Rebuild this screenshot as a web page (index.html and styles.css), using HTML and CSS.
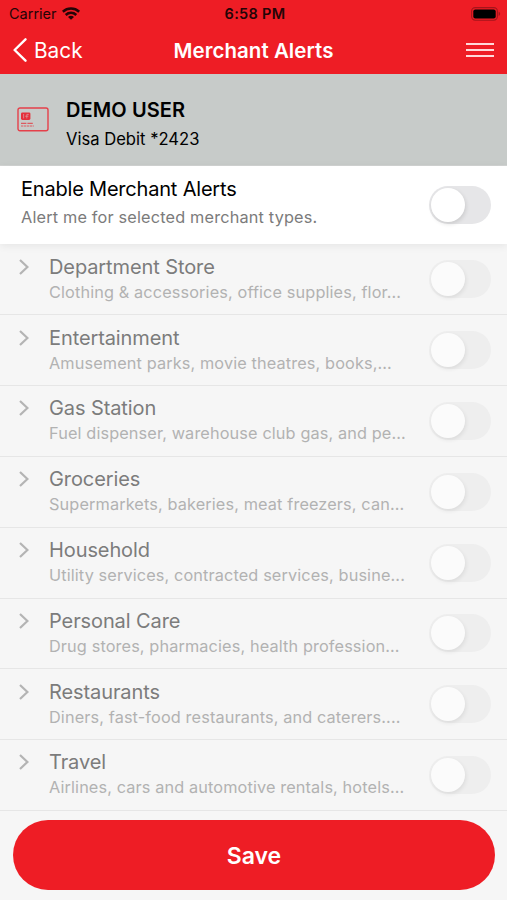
FILE: index.html
```html
<!DOCTYPE html>
<html lang="en">
<head>
    <meta charset="UTF-8">
    <meta name="viewport" content="width=device-width, initial-scale=1.0">
    <title>Merchant Alerts</title>
    <link rel="stylesheet" href="styles.css">
</head>
<body>
    <header class="top">
        <div class="status">
            <div class="carrier">
                <span>Carrier</span>
                <svg width="18" height="13" viewBox="0 0 18 13" fill="none" stroke="#240406" stroke-width="2.6">
                    <path d="M.8 4.7C5.5 .5 12.5 .5 17.2 4.7"/>
                    <path d="M3.7 7.9C6.8 5.2 11.2 5.2 14.3 7.9"/>
                    <path d="M9 12.8L6 9.9C7.8 8.4 10.2 8.4 12 9.9Z" fill="#240406" stroke="none"/>
                </svg>
            </div>
            <div class="time">6:58 PM</div>
            <svg class="battery" width="30" height="14" viewBox="0 0 30 14">
                <rect x=".6" y=".6" width="25.8" height="12.6" rx="3.6" fill="none" stroke="#a5151b" stroke-width="1.1"/>
                <rect x="2.3" y="2.4" width="22.4" height="9" rx="2" fill="#000"/>
                <path d="M27.6 4.8C29.6 5.4 29.6 8.4 27.6 9Z" fill="#a5151b"/>
            </svg>
        </div>
        <nav class="nav">
            <a class="back">
                <svg width="14" height="24" viewBox="0 0 14 24" fill="none" stroke="#fff" stroke-width="2.4" stroke-linecap="round" stroke-linejoin="round"><path d="M12.5 1.3L1.6 12L12.5 22.7"/></svg>
                <span>Back</span>
            </a>
            <h1>Merchant Alerts</h1>
            <div class="menu"><i></i><i></i><i></i></div>
        </nav>
    </header>

    <section class="card">
        <svg width="32" height="25" viewBox="0 0 32 25">
            <rect x="1" y="1" width="30" height="22.8" rx="2" fill="none" stroke="#e5404a" stroke-width="1.4"/>
            <rect x="4" y="5.4" width="9.4" height="7.6" rx="1.4" fill="#e5303a"/>
            <path d="M6.6 7V11.4M9.8 11.4V7.4H11.8M8.2 9.2H11.4" fill="none" stroke="#d9a5a6" stroke-width=".7"/>
            <path d="M4 16.4H16" stroke="#dc5a60" stroke-width="1.3" stroke-dasharray="5.4 1"/>
            <path d="M4 19H16.8" stroke="#dc5a60" stroke-width="1" stroke-dasharray="2.4 .6"/>
        </svg>
        <div>
            <h2>DEMO USER</h2>
            <p>Visa Debit *2423</p>
        </div>
    </section>

    <section class="enable">
        <div>
            <h3>Enable Merchant Alerts</h3>
            <p>Alert me for selected merchant types.</p>
        </div>
        <span class="switch"></span>
    </section>

    <ul class="types">
        <li>
            <svg class="chevron" viewBox="0 0 10 16"><path d="M1 1L8.4 8L1 15"/></svg>
            <div>
                <h3>Department Store</h3>
                <p>Clothing &amp; accessories, office supplies, flor...</p>
            </div>
            <span class="switch"></span>
        </li>
        <li>
            <svg class="chevron" viewBox="0 0 10 16"><path d="M1 1L8.4 8L1 15"/></svg>
            <div>
                <h3>Entertainment</h3>
                <p>Amusement parks, movie theatres, books,...</p>
            </div>
            <span class="switch"></span>
        </li>
        <li>
            <svg class="chevron" viewBox="0 0 10 16"><path d="M1 1L8.4 8L1 15"/></svg>
            <div>
                <h3>Gas Station</h3>
                <p>Fuel dispenser, warehouse club gas, and pe...</p>
            </div>
            <span class="switch"></span>
        </li>
        <li>
            <svg class="chevron" viewBox="0 0 10 16"><path d="M1 1L8.4 8L1 15"/></svg>
            <div>
                <h3>Groceries</h3>
                <p>Supermarkets, bakeries, meat freezers, can...</p>
            </div>
            <span class="switch"></span>
        </li>
        <li>
            <svg class="chevron" viewBox="0 0 10 16"><path d="M1 1L8.4 8L1 15"/></svg>
            <div>
                <h3>Household</h3>
                <p>Utility services, contracted services, busine...</p>
            </div>
            <span class="switch"></span>
        </li>
        <li>
            <svg class="chevron" viewBox="0 0 10 16"><path d="M1 1L8.4 8L1 15"/></svg>
            <div>
                <h3>Personal Care</h3>
                <p>Drug stores, pharmacies, health profession...</p>
            </div>
            <span class="switch"></span>
        </li>
        <li>
            <svg class="chevron" viewBox="0 0 10 16"><path d="M1 1L8.4 8L1 15"/></svg>
            <div>
                <h3>Restaurants</h3>
                <p>Diners, fast-food restaurants, and caterers....</p>
            </div>
            <span class="switch"></span>
        </li>
        <li>
            <svg class="chevron" viewBox="0 0 10 16"><path d="M1 1L8.4 8L1 15"/></svg>
            <div>
                <h3>Travel</h3>
                <p>Airlines, cars and automotive rentals, hotels...</p>
            </div>
            <span class="switch"></span>
        </li>
    </ul>

    <button class="save">Save</button>
</body>
</html>
```
FILE: styles.css
```css
* { box-sizing: border-box; }
body { margin: 0; height: 900px; overflow: hidden; background: #f6f6f6; font-family: Inter, "Liberation Sans", sans-serif; color: #000; }
h1, h2, h3, p, ul { margin: 0; padding: 0; font-weight: 400; }
svg { display: block; flex: none; }

/* red header */
.top { height: 74px; background: #ee1d25; }
.status { display: grid; grid-template-columns: 1fr auto 1fr; align-items: center; height: 27px; padding: 0 6px 0 9px; color: #240406; }
.carrier { display: flex; align-items: center; gap: 6px; font-size: 14.5px; }
.carrier svg { margin-left: -1px; }
.time { font-size: 14.5px; font-weight: 600; letter-spacing: 0.3px; }
.battery { justify-self: end; }
.nav { display: grid; grid-template-columns: 1fr auto 1fr; align-items: center; height: 46px; padding: 0 13px; color: #fff; }
.back { display: flex; align-items: center; gap: 7px; font-size: 20.8px; }
.nav h1 { padding-top: 1px; font-size: 20.5px; line-height: 28px; font-weight: 600; letter-spacing: 0.05px; }
.menu { justify-self: end; display: grid; gap: 4px; width: 28px; }
.menu i { height: 2px; background: #ffd9da; }

.card { display: flex; align-items: center; gap: 17px; height: 92px; padding: 0 17px; background: #c7cbc9; border-bottom: 1px solid #d2d4d3; }
.card div { padding-top: 11px; }
.card h2 { font-size: 20px; line-height: 28px; font-weight: 600; letter-spacing: 0.1px; }
.card p { font-size: 16.6px; line-height: 30px; }

.enable { position: relative; display: flex; justify-content: space-between; height: 78px; padding: 8px 16px 0 21px; background: #fff; box-shadow: 0 2px 8px rgba(0, 0, 0, 0.07); }
.enable h3 { font-size: 20px; line-height: 30px; letter-spacing: -0.2px; }
.enable p { font-size: 16.3px; line-height: 27px; letter-spacing: 0.17px; color: #7b7b7b; }

.switch { flex: none; width: 62px; height: 38px; border-radius: 19px; background: #e6e6e8; margin-top: 12px; padding: 2px; }
.switch::before { content: ""; display: block; width: 34px; height: 34px; border-radius: 50%; background: #fff; box-shadow: 1px 2px 4px rgba(0, 0, 0, 0.12); }

/* merchant types, greyed out while alerts are off */
.types { list-style: none; padding-top: 0.6px; }
.types li { display: flex; height: 70.8px; padding: 8.2px 16px 0 19px; border-bottom: 1.5px solid #e6e6e6; }
.types li div { flex: 1; padding-left: 20px; white-space: nowrap; }
.types h3 { font-size: 20px; line-height: 29px; letter-spacing: -0.1px; color: #7c7c7c; }
.types p { font-size: 16.3px; line-height: 21px; letter-spacing: 0.12px; color: #b2b2b2; }
.types .switch { margin-top: 7.6px; background: #eeeeee; }
.types .switch::before { background: #fbfbfb; box-shadow: 1px 2px 4px rgba(0, 0, 0, 0.08); }
.chevron { width: 10px; height: 16px; margin-top: 6px; fill: none; stroke: #b4b4b4; stroke-width: 2.2; }

.save { display: block; width: 482px; height: 70px; margin: 9.3px 0 0 13px; padding-top: 2px; border: 0; border-radius: 35px; background: #ee1d25; color: #fff; font: 600 23px Inter, "Liberation Sans", sans-serif; }
```
